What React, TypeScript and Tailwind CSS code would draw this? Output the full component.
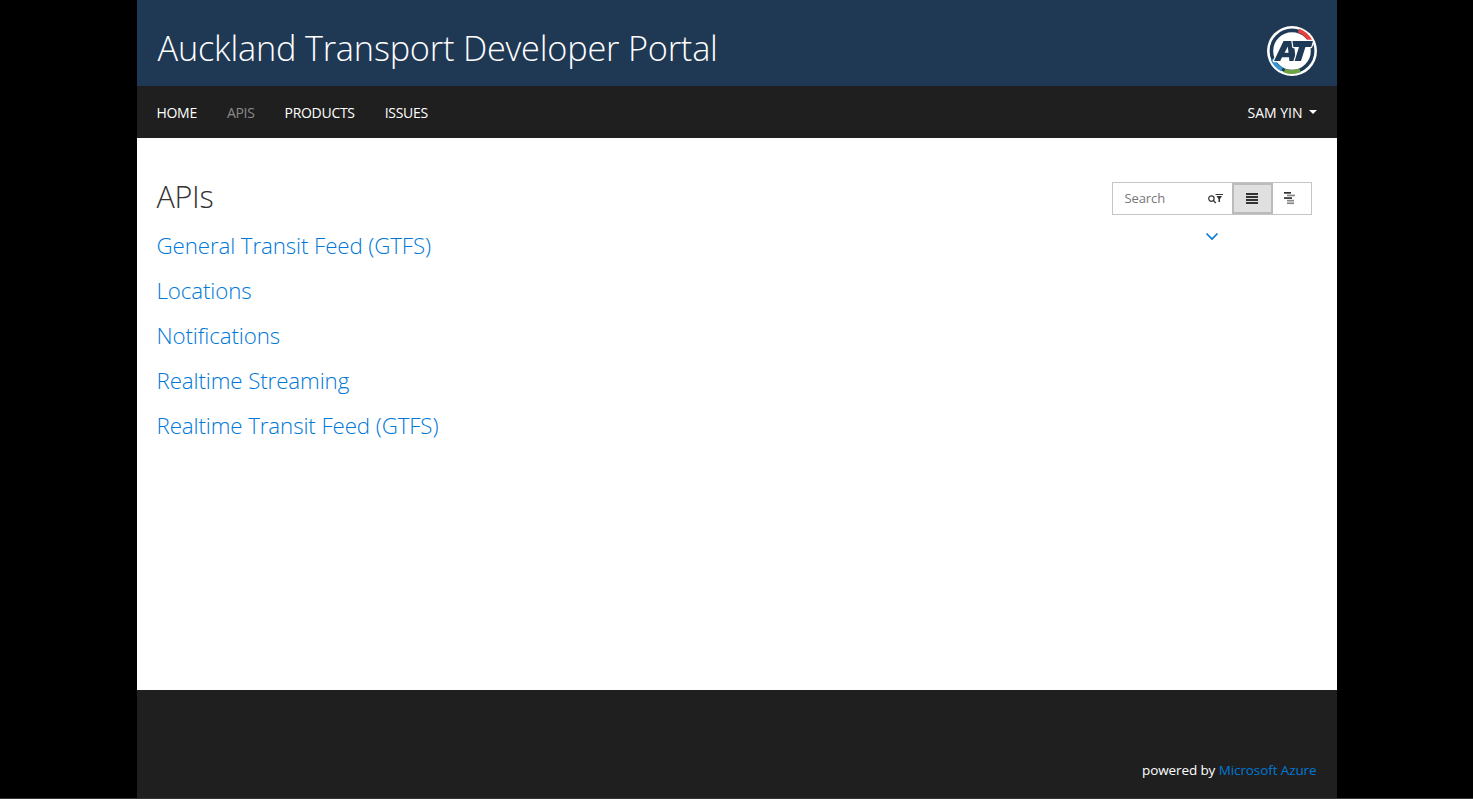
import React from "react";

function Logo() {
  return (
    <svg width="50" height="50" viewBox="0 0 50 50" className="block">
      <circle cx="25" cy="25" r="25" fill="#fff" />
      <circle cx="25" cy="25" r="20.6" fill="none" stroke="#1f3a56" strokeWidth="3.6" />
      <path d="M31.5 4.6 A21 21 0 0 1 43.6 15.5" fill="none" stroke="#e8413c" strokeWidth="4" />
      <path d="M5.4 33 A21 21 0 0 0 15 43.5" fill="none" stroke="#3a96cf" strokeWidth="4" />
      <path d="M17.5 44.6 A21 21 0 0 0 33 44.4" fill="none" stroke="#6ea544" strokeWidth="4" />
      <g stroke="#fff" strokeWidth="2.4" paintOrder="stroke" strokeLinejoin="round">
        <path d="M7 35 L16.5 15 H26.5 L29 35 H22.4 L22 31.2 H15 L13.2 35 Z M17.6 26.8 H21.5 L20.8 20.4 Z" fill="#1f3a56" fillRule="evenodd" />
        <path d="M25.5 15 H46 L44.2 21 H38.4 L34 35 H27.6 L32 21 H26.4 Z" fill="#1f3a56" />
      </g>
    </svg>
  );
}

function Lines() {
  return (
    <svg width="12" height="13" viewBox="0 0 12 13" className="block">
      {[1, 4, 7, 10].map((y) => (
        <rect key={y} x={0} y={y} width={12} height={2} fill="#333" />
      ))}
    </svg>
  );
}

function Staggered() {
  const rows: [number, number, string][] = [
    [0, 7, "#333"],
    [3, 8, "#888"],
    [0, 8, "#333"],
    [3, 7, "#888"],
    [3, 7, "#888"],
  ];
  return (
    <svg width="12" height="13" viewBox="0 0 12 13" className="block">
      {rows.map(([x, w, c], i) => (
        <rect key={i} x={x} y={i * 2.6} width={w} height={1.7} fill={c} />
      ))}
    </svg>
  );
}

const apis = [
  "General Transit Feed (GTFS)",
  "Locations",
  "Notifications",
  "Realtime Streaming",
  "Realtime Transit Feed (GTFS)",
];

export default function App() {
  return (
    <div className="h-[799px] bg-black font-['Open_Sans','Noto_Sans',sans-serif] overflow-hidden flex flex-col">
      <div className="mx-auto w-[1200px] flex-1 flex flex-col">
        <header className="h-[86px] shrink-0 bg-[#1f3955] flex items-start justify-between px-5 pt-[26px]">
          <h1 className="mt-[5px] ml-[1px] text-[34.3px] font-light text-white leading-none tracking-[-0.2px]">
            Auckland Transport Developer Portal
          </h1>
          <Logo />
        </header>
        <nav className="h-[52px] shrink-0 bg-[#1f1f1f] flex items-center justify-between px-5 text-[14px] tracking-[-0.3px]">
          <div className="flex gap-[30px] text-white">
            <span>HOME</span>
            <span className="text-[#8a8a8a]">APIS</span>
            <span>PRODUCTS</span>
            <span>ISSUES</span>
          </div>
          <div className="flex items-center gap-[6px] text-white tracking-normal">
            <span>SAM YIN</span>
            <span className="w-0 h-0 border-x-[4px] border-x-transparent border-t-[4px] border-t-white" />
          </div>
        </nav>
        <main className="flex-1 bg-white pl-5 pr-[25px] pt-[44px] flex justify-between">
          <div>
            <h2 className="-mt-[1px] text-[30.5px] font-light text-[#333] leading-[30px] tracking-[-0.3px]">APIs</h2>
            <ul className="mt-[20px] flex flex-col gap-[15px]">
              {apis.map((a) => (
                <li key={a} className="text-[22.3px] leading-[30px] text-[#0078d7] font-light tracking-[-0.1px]">
                  {a}
                </li>
              ))}
            </ul>
          </div>
          <div className="flex flex-col w-[200px]">
            <div className="flex h-[33px] border border-[#c4c4c4]">
              <div className="w-[119px] flex items-center justify-between pl-[12px] pr-[9px] pt-[1px]">
                <span className="text-[13px] text-[#777] tracking-[-0.1px]">Search</span>
                <svg width="15" height="10" viewBox="0 0 15 10" className="block -mt-[1px]">
                  <circle cx="3.4" cy="4.6" r="2.7" fill="none" stroke="#333" strokeWidth="1.2" />
                  <path d="M5.3 6.5 L7.8 9" stroke="#333" strokeWidth="1.2" />
                  <path d="M7.5 0 H15 V1 H7.5 Z M8.5 2 H14 L12 5 V8 H10.5 V5 Z" fill="#333" />
                </svg>
              </div>
              <div className="w-[41px] bg-[#e0e0e0] border-2 border-[#bbb] flex items-center justify-center">
                <Lines />
              </div>
              <div className="flex-1 flex items-center justify-start pl-[11px]">
                <Staggered />
              </div>
            </div>
            <div className="flex justify-center mt-[17px]">
              <svg width="14" height="9" viewBox="0 0 14 9" className="block">
                <path d="M1.5 1.5 L7 7 L12.5 1.5" fill="none" stroke="#0078d7" strokeWidth="1.6" />
              </svg>
            </div>
          </div>
        </main>
        <footer className="h-[108px] shrink-0 bg-[#1f1f1f] flex items-end justify-end pr-5 pb-[18px] text-[13.5px] leading-[20px] text-white tracking-[-0.1px]">
          <span>
            powered by <span className="text-[#0078d7]">Microsoft Azure</span>
          </span>
        </footer>
      </div>
      <div className="h-px shrink-0 bg-[#333]" />
    </div>
  );
}
